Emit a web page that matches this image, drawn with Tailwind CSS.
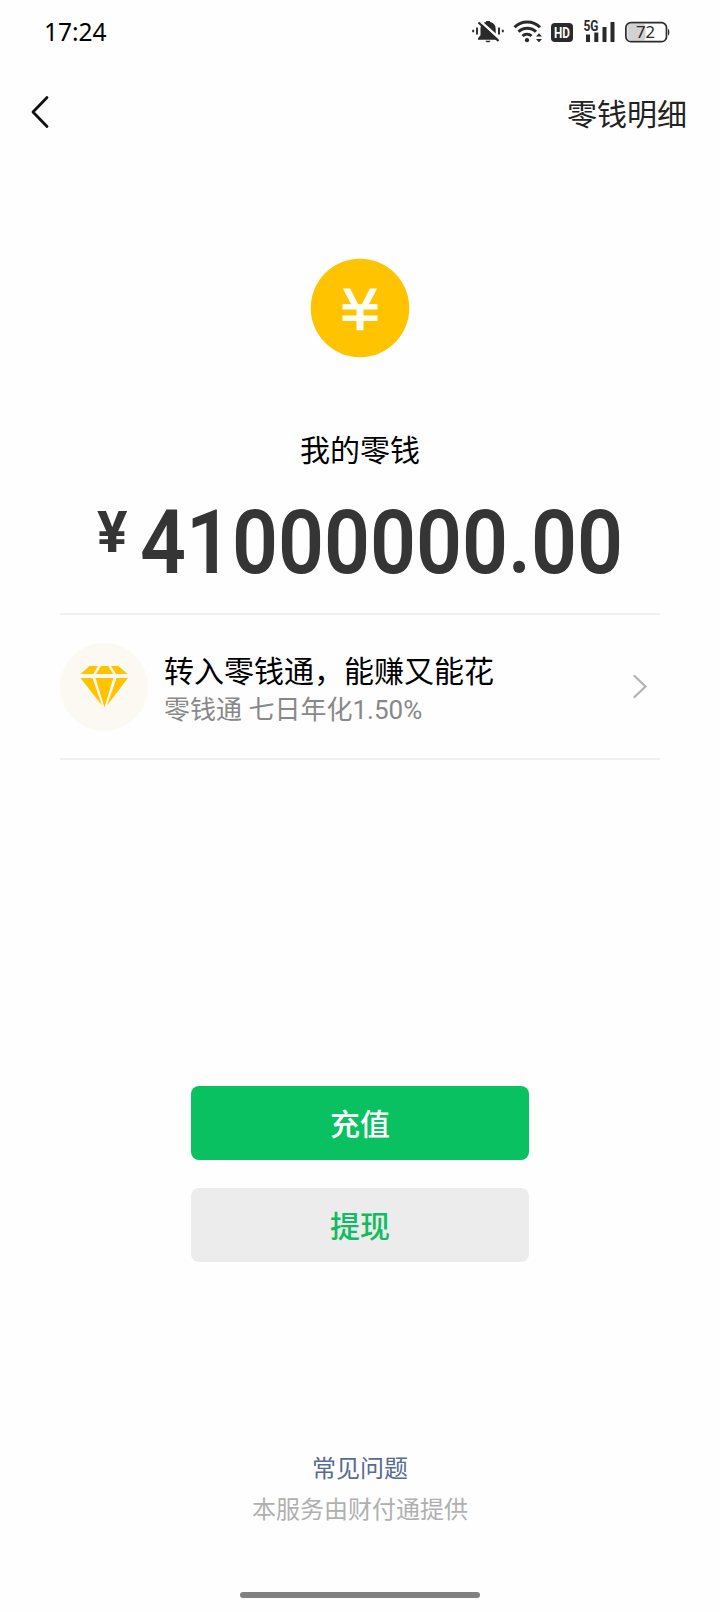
<!DOCTYPE html>
<html lang="zh-CN">
<head>
<meta charset="utf-8">
<title>零钱</title>
<script src="https://cdn.jsdelivr.net/npm/@tailwindcss/browser@4"></script>
</head>
<body class="bg-[#fefefe] font-['Roboto','Noto_Sans_CJK_SC',sans-serif] text-black">
<div class="flex h-[1612px] w-[720px] flex-col overflow-hidden">
  <!-- status bar -->
  <header class="flex h-16 items-center justify-between pr-[49px] pl-11">
    <span class="pt-px font-['Noto_Sans',sans-serif] text-[24.500px] leading-none">17:24</span>
    <svg class="h-[45px] w-[200px]" viewBox="471 10 200 45" fill="#2a2a2a">
      <path d="M480.500 29c0-4 2-6.300 5.700-7V21h3.600v1c3.700.7 5.900 3 5.900 7v6.200l2.600 3v1.600H478v-1.600l2.500-3z"/>
      <path d="M485.500 40.700h5c-.5 2.200-4.500 2.200-5 0z"/>
      <path d="M479.500 20.500l21 19" stroke="#fefefe" stroke-width="2.400"/>
      <path d="M478.500 22.500l20 18.500" stroke="#2a2a2a" stroke-width="2.200"/>
      <path d="M473.200 29.800v2.500M477 27.500v7M499 27.500v7M502.800 29.800v2.500" stroke="#2a2a2a" stroke-width="1.900"/>
      <g fill="none" stroke="#2a2a2a" stroke-width="3">
        <path d="M514.500 27.300a18 18 0 0 1 25.500 0M518.500 31.800a12.300 12.300 0 0 1 17.500 0M522.500 36a6.700 6.700 0 0 1 9 0"/>
      </g>
      <circle cx="527" cy="40.200" r="2.100"/>
      <path d="M536 36.500l3-3.300 3 3.300zM536 39l3 3.300 3-3.300z"/>
      <rect x="551" y="23" width="22" height="19" rx="4"/>
      <text x="562" y="37.600" text-anchor="middle" textLength="16" lengthAdjust="spacingAndGlyphs" class="font-['Roboto'] text-[14px] font-bold" fill="#fff">HD</text>
      <text x="583.500" y="31.200" textLength="15" lengthAdjust="spacingAndGlyphs" class="font-['Roboto'] text-[14px] font-bold">5G</text>
      <path d="M586 34.500h4V42h-4zM594.300 32.500h4V42h-4zM602.500 27h4v15h-4zM610.500 22h4v20h-4z"/>
      <rect x="627.500" y="24" width="18" height="16.500" rx="3" fill="#d2d2d2"/>
      <rect x="625.900" y="22.700" width="40.600" height="19" rx="5" fill="none" stroke="#2a2a2a" stroke-width="1.700"/>
      <path d="M668 28.800c1.800.4 1.800 6.400 0 6.800z"/>
      <text x="645.500" y="37.700" text-anchor="middle" textLength="19" lengthAdjust="spacingAndGlyphs" class="font-['Noto_Sans'] text-[15.500px]">72</text>
    </svg>
  </header>

  <nav class="flex h-[100px] items-center justify-between pr-[33px] pb-1 pl-[30px]">
    <svg class="h-9 w-5" viewBox="0 0 20 36" fill="none" stroke="#111" stroke-width="2.800" stroke-linecap="round" stroke-linejoin="round"><path d="M17 3.500L3 18l14 14.500"/></svg>
    <a class="pt-1.5 text-[30px] leading-[44px] text-[#222]">零钱明细</a>
  </nav>

  <main class="flex flex-col items-center px-[60px] pt-[94px]">
    <svg class="size-[100px]" viewBox="0 0 100 100">
      <circle cx="50" cy="50" r="49.300" fill="#ffc300"/>
      <path d="M32.800 30.500h7.400L48 46h4l7.800-15.500h7.400L59 46h8.500v5.500H53.500v6h14V63h-14v9.200h-7V63h-14v-5.500h14v-6h-14V46H41z" fill="#fffdf5"/>
    </svg>
    <h1 class="mt-[71px] text-[30px] leading-[44px] font-normal">我的零钱</h1>
    <div class="flex h-[140px] w-full items-start pt-[28px] pl-[37px] text-[#353535]">
      <span class="w-[43px] shrink-0 origin-left scale-x-[0.980] text-[58px] leading-[62px] font-bold">¥</span>
      <span class="shrink-0 origin-left scale-x-[0.905] text-[89px] leading-[84px] font-semibold whitespace-nowrap">41000000.00</span>
    </div>
    <section class="flex h-[147px] w-full items-center border-t-2 border-b-2 border-[#f0f0f0]">
      <svg class="size-[88px] shrink-0" viewBox="0 0 88 88">
        <circle cx="44" cy="44" r="44" fill="#fcf9f2"/>
        <g fill="#ffc300"><path d="M29.500 23H38l-4.700 8H20.500zM41 23h7.200l5 8H36zM51 23h7.500l9 8H56zM20.500 35H32.500l9.500 27.500zM35.500 35h17.800L44.500 64.500zM56.500 35h11.500L47 62.500z"/></g>
      </svg>
      <div class="ml-4 flex-1 pt-[7px]">
        <p class="text-[30px] leading-10">转入零钱通，能赚又能花</p>
        <p class="text-[26px] leading-9 text-[#888]">零钱通 七日年化1.50%</p>
      </div>
      <svg class="mr-3 h-7 w-4" viewBox="0 0 16 28" fill="none" stroke="#b2b2b2" stroke-width="2.200" stroke-linecap="round"><path d="M2.500 3L13.500 13.500 2.500 24"/></svg>
    </section>
  </main>

  <div class="mt-[326px] flex flex-col items-center gap-7 text-[30px] font-medium">
    <button class="h-[74px] w-[338px] rounded-lg bg-[#09c160] pt-0.5 text-white">充值</button>
    <button class="h-[74px] w-[338px] rounded-lg bg-[#ececec] pt-0.5 text-[#12bb61]">提现</button>
  </div>

  <footer class="mt-auto flex flex-col items-center text-[24px]">
    <a class="leading-[40px] text-[#576b95]">常见问题</a>
    <p class="leading-[42px] text-[#b0b0b0]">本服务由财付通提供</p>
    <div class="mt-[61px] mb-[14px] h-1.5 w-60 rounded-full bg-[#808080]"></div>
  </footer>
</div>
</body>
</html>
